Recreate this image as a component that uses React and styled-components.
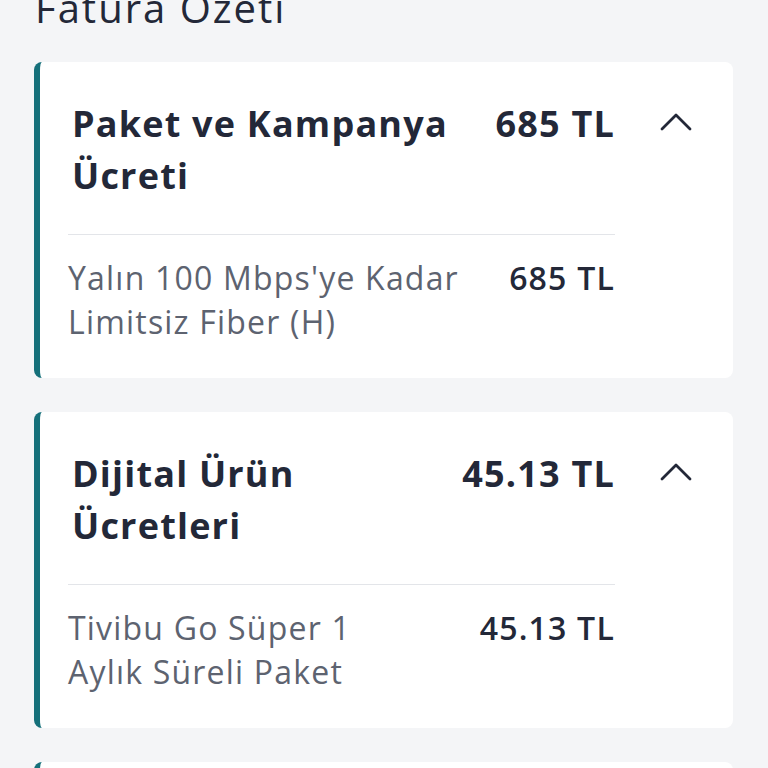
import React from "react"
import styled, { createGlobalStyle } from "styled-components"

const GlobalStyle = createGlobalStyle`
  html, body {
    margin: 0;
    padding: 0;
    background: #f4f5f7;
  }
  body {
    font-family: "Open Sans", "Noto Sans", "DejaVu Sans", sans-serif;
    color: #232838;
    overflow: hidden;
  }
`

const Page = styled.div`
  padding: 0 35px 0 34px;
`

const Heading = styled.h1`
  margin: -16px 0 30px 1px;
  font-size: 40px;
  line-height: 48px;
  font-weight: 500;
  letter-spacing: 2px;
  color: #232838;
`

const CardList = styled.div`
  display: flex;
  flex-direction: column;
  gap: 34px;
`

const Card = styled.section`
  display: flex;
  align-items: flex-start;
  background: #ffffff;
  border-left: 6px solid #15707a;
  border-radius: 8px;
  padding: 36px 41px 34px 28px;
`

const Content = styled.div`
  flex: 1;
  min-width: 0;
`

const Header = styled.div`
  display: flex;
  justify-content: space-between;
  align-items: flex-start;
  gap: 32px;
  padding-left: 4px;
`

const Title = styled.h2`
  margin: 0;
  font-size: 36px;
  line-height: 52px;
  font-weight: 700;
  letter-spacing: 1.2px;
  color: #232838;
`

const Amount = styled.span`
  font-size: ${p => (p.$large ? "36px" : "32px")};
  line-height: ${p => (p.$large ? "52px" : "44px")};
  font-weight: ${p => (p.$large ? 700 : 600)};
  letter-spacing: 1.2px;
  color: #232838;
  white-space: nowrap;
`

const Divider = styled.hr`
  border: none;
  height: 1px;
  background: #e3e5e9;
  margin: 32px 0 21px;
`

const ItemRow = styled.div`
  display: flex;
  justify-content: space-between;
  align-items: flex-start;
  gap: 48px;
`

const ItemName = styled.span`
  font-size: 32px;
  line-height: 44px;
  font-weight: 400;
  letter-spacing: 1.2px;
  color: #5d6370;
`

const Toggle = styled.button`
  flex: none;
  width: 32px;
  height: 18px;
  margin: 15px 0 0 45px;
  padding: 0;
  border: none;
  background: none;
  color: #232838;
  cursor: pointer;

  svg {
    display: block;
  }
`

const ChevronUp = () => (
  <svg width="32" height="18" viewBox="0 0 32 18" fill="none">
    <polyline
      points="2,16 16,2 30,16"
      stroke="currentColor"
      strokeWidth="2.8"
      strokeLinecap="round"
      strokeLinejoin="round"
    />
  </svg>
)

const sections = [
  {
    title: "Paket ve Kampanya Ücreti",
    total: "685 TL",
    items: [{ name: "Yalın 100 Mbps'ye Kadar Limitsiz Fiber (H)", amount: "685 TL" }],
  },
  {
    title: "Dijital Ürün Ücretleri",
    total: "45.13 TL",
    items: [{ name: "Tivibu Go Süper 1 Aylık Süreli Paket", amount: "45.13 TL" }],
  },
  {
    title: "Diğer Ücretler",
    total: "12.50 TL",
    items: [{ name: "Modem Kullanım Bedeli", amount: "12.50 TL" }],
  },
]

export default function App() {
  return (
    <>
      <GlobalStyle />
      <Page>
        <Heading>Fatura Özeti</Heading>
        <CardList>
          {sections.map(section => (
            <Card key={section.title}>
              <Content>
                <Header>
                  <Title>{section.title}</Title>
                  <Amount $large>{section.total}</Amount>
                </Header>
                <Divider />
                {section.items.map(item => (
                  <ItemRow key={item.name}>
                    <ItemName>{item.name}</ItemName>
                    <Amount>{item.amount}</Amount>
                  </ItemRow>
                ))}
              </Content>
              <Toggle aria-label="Daralt">
                <ChevronUp />
              </Toggle>
            </Card>
          ))}
        </CardList>
      </Page>
    </>
  )
}
